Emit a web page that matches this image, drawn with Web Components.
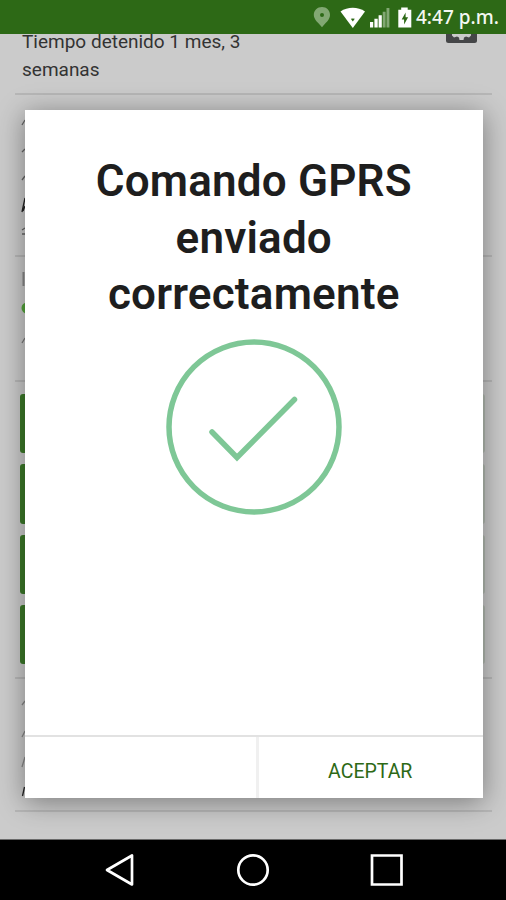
<!DOCTYPE html>
<html lang="es">
<head>
<meta charset="utf-8">
<title>Comando GPRS</title>
<style>
    body {
        margin: 0;
        background: #000;
        font-family: Roboto, "Liberation Sans", sans-serif;
    }
</style>
</head>
<body>
<phone-screen>
    <status-bar slot="status" time="4:47 p.m."></status-bar>
    <vehicle-detail>Tiempo detenido 1 mes, 3 semanas</vehicle-detail>
    <result-dialog slot="dialog" action="ACEPTAR">Comando GPRS enviado correctamente</result-dialog>
    <system-nav slot="nav"></system-nav>
</phone-screen>

<script>
class PhoneScreen extends HTMLElement {
    constructor() {
        super();
        this.attachShadow({ mode: 'open' });
        this.shadowRoot.innerHTML = `
        <style>
            :host {
                display: flex;
                flex-direction: column;
                width: 506px;
                height: 900px;
                overflow: hidden;
            }
            .content {
                position: relative;
                flex: 1;
                min-height: 0;
                overflow: hidden;
                background: #cbcbcb;
            }
            .overlay {
                position: absolute;
                inset: 0;
                display: flex;
                padding: 76px 23.5px 41px 25px;
            }
        </style>
        <slot name="status"></slot>
        <div class="content">
            <slot></slot>
            <div class="overlay"><slot name="dialog"></slot></div>
        </div>
        <slot name="nav"></slot>
        `;
    }
}

class StatusBar extends HTMLElement {
    connectedCallback() {
        this.attachShadow({ mode: 'open' });
        this.shadowRoot.innerHTML = `
        <style>
            :host {
                display: flex;
                flex: none;
                align-items: center;
                justify-content: flex-end;
                height: 34px;
                padding-right: 8px;
                box-sizing: border-box;
                background: #2d6916;
                color: #f4f8f2;
                font: 500 19px/36px "Noto Sans", "Open Sans", sans-serif;
            }
            svg {
                flex: none;
            }
            .time {
                width: 82px;
                white-space: nowrap;
            }
        </style>
        <svg width="104" height="34" viewBox="312 0 104 34">
            <path fill="#82a873" fill-rule="evenodd" d="M322 7c-4.700 0-8.200 3.500-8.200 8 0 4.800 5 8.200 8.200 12.300 3.200-4.100 8-7.500 8-12.300 0-4.500-3.400-8-8-8zm0 6a2 2 0 1 1 0 4 2 2 0 0 1 0-4z"/>
            <path fill="#fff" d="M340.500 11.500C347.500 6.500 358 6.500 365 11.500L352.800 28z"/>
            <path fill="#2d6916" d="M350.800 18.800q2-.8 4 0l-2 2.600z"/>
            <path fill="#fff" d="M370 22h3.200v5.500H370zM374.400 18.700h3.300v8.800h-3.300zM378.600 15.300h3.200v12.200h-3.200z"/>
            <path fill="#82a873" d="M382.700 11.700h2.900v15.800h-2.900zM386.500 8h2.900v19.500h-2.900z"/>
            <path fill="#fff" d="M401.200 7.500h6.500v2.200h3.600v17.800h-13V9.700h2.900z"/>
            <path fill="#2d6916" d="M405.600 12.500v4.700h2.500l-4 7.200v-5h-2.400z"/>
        </svg>
        <span class="time">${this.getAttribute('time')}</span>
        `;
    }
}

class VehicleDetail extends HTMLElement {
    constructor() {
        super();
        this.attachShadow({ mode: 'open' });
        this.shadowRoot.innerHTML = `
        <style>
            :host {
                display: block;
                padding: 0 14px 0 15px;
            }
            section {
                box-sizing: border-box;
                border-bottom: 2px solid #b7b7b7;
            }
            .summary {
                display: flex;
                justify-content: space-between;
                height: 61px;
                padding: 0 14px 0 7px;
            }
            .summary p {
                width: 250px;
                margin: -6px 0 0;
                color: #333;
                font-size: 19px;
                line-height: 28px;
            }
            .status { height: 162px; }
            .position { height: 125px; }
            .commands {
                display: flex;
                flex-direction: column;
                gap: 11px;
                height: 297px;
                padding: 12px 7px 0 5px;
            }
            .command {
                height: 59.300px;
                flex: none;
                border-radius: 3px;
                background: linear-gradient(90deg, #3c7a29 0 60%, #b4bbb2 90%);
            }
            .history { height: 133px; }
            svg {
                display: block;
                flex: none;
            }
        </style>
        <section class="summary">
            <p><slot></slot></p>
            <svg width="32" height="12" viewBox="0 0 32 12">
                <path fill="#454648" d="M0 0h31v6.500q0 2.500-2.500 2.500h-26Q0 9 0 6.500z"/>
                <path fill="#cbcbcb" d="M6 0h19v1.500l-2 2-3-1-2 1-.5 2.500h-4l-.5-2.500-2-1-3 1-2-2z"/>
            </svg>
        </section>
        <section class="status">
            <svg width="12" height="160" viewBox="15 95 12 160" fill="none" stroke="#666" stroke-width="1.300">
                <path d="M22 125l3-5M22 152l3-3M22 180l3-4M22 234h3M22 230l3-2"/>
                <path stroke="#222" d="M22 212l3-14M23 211l2-5"/>
            </svg>
        </section>
        <section class="position">
            <svg width="12" height="123" viewBox="15 257 12 123">
                <path fill="#888" d="M22.500 272h2v14h-2z"/>
                <circle cx="27" cy="308" r="5.500" fill="#55a63c"/>
                <path fill="none" stroke="#777" stroke-width="1.300" d="M22 343l3-5"/>
            </svg>
        </section>
        <section class="commands">
            <div class="command"></div>
            <div class="command"></div>
            <div class="command"></div>
            <div class="command"></div>
        </section>
        <section class="history">
            <svg width="12" height="131" viewBox="15 679 12 131" fill="none" stroke="#888" stroke-width="1.300">
                <path d="M22 705l3-4M22 737l3-6M22 767l3-10"/>
                <path stroke="#222" d="M22.500 796l2-9"/>
            </svg>
        </section>
        `;
    }
}

class ResultDialog extends HTMLElement {
    connectedCallback() {
        this.attachShadow({ mode: 'open' });
        this.shadowRoot.innerHTML = `
        <style>
            :host {
                display: flex;
                flex: 1;
                flex-direction: column;
                background: #fff;
                box-shadow: 0 4px 26px rgba(0, 0, 0, 0.4);
            }
            .body {
                display: flex;
                flex: 1;
                flex-direction: column;
                align-items: center;
                padding-top: 43px;
            }
            h1 {
                width: 350px;
                margin: 0;
                color: #1e1e1e;
                font-size: 44px;
                font-weight: 600;
                line-height: 56.500px;
                letter-spacing: 0.2px;
                text-align: center;
            }
            svg {
                margin-top: 15px;
            }
            footer {
                display: grid;
                grid-template-columns: 234px 1fr;
                height: 63px;
                border-top: 2px solid #e2e2e2;
                box-sizing: border-box;
            }
            .blank {
                border-right: 3px solid #f0f0f0;
            }
            button {
                padding: 9px 1px 0 0;
                border: 0;
                background: none;
                color: #2d6916;
                font: 400 19.500px/24px Roboto, "Liberation Sans", sans-serif;
            }
        </style>
        <div class="body">
            <h1><slot></slot></h1>
            <svg width="178" height="178" viewBox="165 338 178 178" fill="none" stroke="#7ec796" stroke-width="5.500">
                <circle cx="254" cy="427" r="85"/>
                <path stroke-linecap="round" d="M212 432l25 25.500 57.500-58"/>
            </svg>
        </div>
        <footer>
            <div class="blank"></div>
            <button>${this.getAttribute('action')}</button>
        </footer>
        `;
    }
}

class SystemNav extends HTMLElement {
    constructor() {
        super();
        this.attachShadow({ mode: 'open' });
        this.shadowRoot.innerHTML = `
        <style>
            :host {
                display: flex;
                flex: none;
                align-items: center;
                justify-content: space-between;
                height: 61px;
                padding: 0 101px 0 104px;
                box-sizing: border-box;
                border-top: 1px solid #6a6a6a;
                background: #000;
            }
            svg {
                fill: none;
                stroke: #fff;
                stroke-width: 2.700;
            }
        </style>
        <svg width="34" height="36" viewBox="104 852 34 36"><path stroke-linejoin="round" d="M132 855.500v29l-25-14.500z"/></svg>
        <svg width="36" height="36" viewBox="236 852 36 36"><circle cx="253" cy="870" r="14.700"/></svg>
        <svg width="36" height="36" viewBox="369 852 36 36"><path d="M372 855.500h29.500v29H372z"/></svg>
        `;
    }
}

customElements.define('phone-screen', PhoneScreen);
customElements.define('status-bar', StatusBar);
customElements.define('vehicle-detail', VehicleDetail);
customElements.define('result-dialog', ResultDialog);
customElements.define('system-nav', SystemNav);
</script>
</body>
</html>
